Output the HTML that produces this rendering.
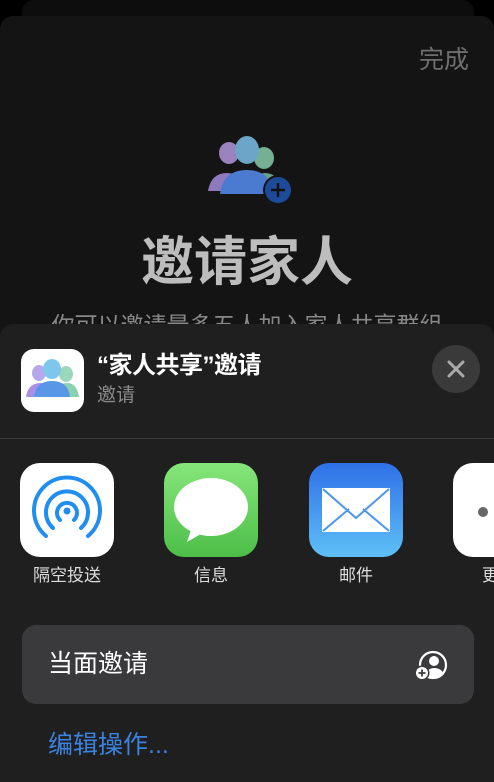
<!DOCTYPE html>
<html style="width:494px;height:782px;overflow:hidden"><head><meta charset="utf-8"><style>
*{margin:0;padding:0;box-sizing:border-box}
body{width:494px;height:782px;background:#000;position:relative;overflow:hidden;font-family:"Liberation Sans","Noto Sans CJK SC",sans-serif}
.abs{position:absolute}
</style></head><body>
<div class="abs" style="left:22px;top:0;width:452px;height:40px;background:#0d0d0d;border-radius:12px"></div>
<div class="abs" style="left:0;top:16px;width:494px;height:766px;background:#141414;border-radius:13px 13px 0 0"></div>
<div class="abs" style="left:419px;top:43px;font-size:25px;color:#6e6e6e;line-height:34px">完成</div>
<svg class="abs" style="left:205px;top:136px" width="90" height="72" viewBox="0 0 90 72">
<ellipse cx="24" cy="17" rx="10" ry="11" fill="#a88fd0" opacity=".9"/>
<ellipse cx="59" cy="22" rx="10" ry="11" fill="#7fc0a2" opacity=".9"/>
<path d="M3 55 Q6 37 22 37 Q35 37 38 55Z" fill="#9a84d0" opacity=".9"/>
<path d="M45 55 Q50 37 60 37 Q72 37 74 50Z" fill="#6fb09a" opacity=".9"/>
<ellipse cx="42" cy="14" rx="12" ry="14" fill="#6ba6c8"/>
<path d="M15 58 Q18 34 42 34 Q66 34 68 58Z" fill="#4a7bd0"/>
<circle cx="73" cy="54" r="15" fill="#141414"/>
<circle cx="73" cy="54" r="13" fill="#1e4a9a"/>
<path d="M73 47v14M66 54h14" stroke="#111" stroke-width="2.4"/>
</svg>
<div class="abs" style="left:0;width:494px;top:230px;text-align:center;font-size:53px;font-weight:bold;color:#bdbdbd;line-height:66px">邀请家人</div>
<div class="abs" style="left:20px;width:454px;top:310px;text-align:center;font-size:23px;color:#888;line-height:30px">你可以邀请最多五人加入家人共享群组</div>
<div class="abs" style="left:0;top:324px;width:494px;height:458px;background:#1f1f1f;border-radius:13px 13px 0 0"></div>
<div class="abs" style="left:21px;top:349px;width:63px;height:63px;background:#fff;border-radius:13px;overflow:hidden">
<svg width="63" height="63" viewBox="0 0 63 63">
<ellipse cx="18" cy="24" rx="7" ry="8" fill="#b7a8ec"/>
<ellipse cx="45" cy="25" rx="7" ry="8" fill="#9ad8bc"/>
<path d="M5 48 Q7 34 20 34 Q30 34 32 48Z" fill="#a890ea"/>
<path d="M34 48 Q36 34 46 34 Q56 34 58 48Z" fill="#8ad0b2"/>
<ellipse cx="31" cy="20" rx="9" ry="10" fill="#7ec6ec"/>
<path d="M13 48 Q15 32 31 32 Q47 32 49 48Z" fill="#5a96e6"/>
</svg></div>
<div class="abs" style="left:97px;top:351px;font-size:24px;color:#fff;line-height:30px;font-weight:bold;letter-spacing:-0.5px">“家人共享”邀请</div>
<div class="abs" style="left:97px;top:384px;font-size:19px;color:#8a8a8a;line-height:24px">邀请</div>
<div class="abs" style="left:432px;top:345px;width:48px;height:48px;border-radius:50%;background:#3a3a3a"></div>
<svg class="abs" style="left:432px;top:345px" width="48" height="48"><path d="M17 17L31 31M31 17L17 31" stroke="#aaa" stroke-width="3" stroke-linecap="round"/></svg>
<div class="abs" style="left:0;top:438px;width:494px;height:1px;background:#3a3a3a"></div>
<div class="abs" style="left:20px;top:463px;width:94px;height:94px;background:#fff;border-radius:20px"></div>
<svg class="abs" style="left:20px;top:463px" width="94" height="94" viewBox="0 0 94 94" fill="none" stroke="#1f8ef0" stroke-width="4" stroke-linecap="round">
<circle cx="47" cy="48" r="3.5" fill="#1f8ef0" stroke="none"/>
<path d="M40 57A10 10 0 1 1 54 57"/>
<path d="M33 65A21 21 0 1 1 61 65"/>
<path d="M26 73A33 33 0 1 1 68 73"/>
</svg>
<div class="abs" style="left:164px;top:463px;width:94px;height:94px;border-radius:20px;background:linear-gradient(#86e67a,#4cbe48)"></div>
<svg class="abs" style="left:164px;top:463px" width="94" height="94"><ellipse cx="47" cy="44" rx="37" ry="29" fill="#fff"/><path d="M28 64L23 79L42 68Z" fill="#fff"/></svg>
<div class="abs" style="left:309px;top:463px;width:94px;height:94px;border-radius:20px;background:linear-gradient(#2f70e8,#5ec0f6)"></div>
<svg class="abs" style="left:309px;top:463px" width="94" height="94"><rect x="13" y="25" width="68" height="44" fill="#fff"/><path d="M14 26L47 55L80 26M14 68L40 46M80 68L54 46" stroke="#4a96ec" stroke-width="2" fill="none"/></svg>
<div class="abs" style="left:453px;top:463px;width:94px;height:94px;border-radius:20px;background:#fff"></div>
<div class="abs" style="left:478px;top:507px;width:10px;height:10px;border-radius:50%;background:#666"></div>
<div class="abs" style="left:17px;width:100px;top:564px;text-align:center;font-size:17px;color:#ddd;line-height:24px">隔空投送</div>
<div class="abs" style="left:161px;width:100px;top:564px;text-align:center;font-size:17px;color:#ddd;line-height:24px">信息</div>
<div class="abs" style="left:306px;width:100px;top:564px;text-align:center;font-size:17px;color:#ddd;line-height:24px">邮件</div>
<div class="abs" style="left:482px;top:564px;font-size:17px;color:#ddd;line-height:24px">更</div>
<div class="abs" style="left:22px;top:625px;width:452px;height:79px;background:#3a3a3c;border-radius:14px"></div>
<div class="abs" style="left:48px;top:648px;font-size:25px;color:#fff;line-height:32px">当面邀请</div>
<svg class="abs" style="left:414px;top:651px" width="34" height="30" viewBox="0 0 34 30">
<circle cx="19" cy="14" r="13" fill="none" stroke="#fff" stroke-width="2.2"/>
<circle cx="20" cy="10" r="5" fill="#fff"/>
<path d="M11 24Q14 17 20 17Q27 17 30 23Q26 28 19 28Z" fill="#fff"/>
<circle cx="8" cy="22" r="7.5" fill="#3a3a3c"/>
<circle cx="8" cy="22" r="6" fill="#fff"/>
<path d="M8 18.5v7M4.5 22h7" stroke="#3a3a3c" stroke-width="1.8"/>
</svg>
<div class="abs" style="left:48px;top:729px;font-size:25px;color:#3b82e0;line-height:32px">编辑操作...</div>
</body></html>
